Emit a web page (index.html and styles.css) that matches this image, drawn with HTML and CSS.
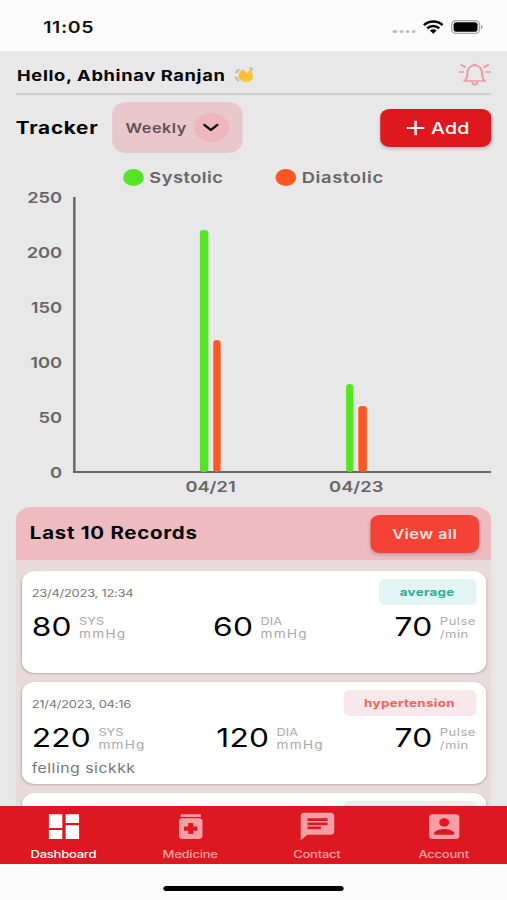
FILE: index.html
```html
<!DOCTYPE html>
<html lang="en">
<head>
  <meta charset="utf-8">
  <title>Blood Pressure Tracker</title>
  <link rel="stylesheet" href="styles.css">
</head>
<body>
  <div class="screen">
    <div class="status-bar">
      <span class="time">11:05</span>
      <div class="status-icons">
        <div class="dots"><i></i><i></i><i></i><i></i></div>
        <svg class="wifi" viewBox="0 0 20 14" preserveAspectRatio="none">
          <path d="M1 5.2a13 13 0 0 1 18 0M4.2 8.4a8.3 8.3 0 0 1 11.6 0" fill="none" stroke="#000" stroke-width="2.5"/>
          <path d="M6.8 10.6a4.6 4.6 0 0 1 6.4 0L10 13.8z"/>
        </svg>
        <svg class="battery" viewBox="0 0 27 14">
          <rect x=".6" y=".6" width="22.8" height="12.8" rx="3.6" fill="none" stroke="#a5a5a5" stroke-width="1.1"/>
          <rect x="2.2" y="2.2" width="19.6" height="9.6" rx="2"/>
          <path d="M24.7 4.9c1.7.6 1.7 3.6 0 4.2z" fill="#999"/>
        </svg>
      </div>
    </div>

    <div class="header">
      <span class="hello">Hello, Abhinav Ranjan</span>
      <svg class="wave" viewBox="0 0 20 20">
        <path d="M2 7l2.500-3M1.500 13l2.500 3.500M15.500 1.800l2 1.500" fill="none" stroke="#b9bcc2" stroke-width="2.200" stroke-linecap="round"/>
        <path d="M8.500 3.500l5 4.500.8-3.500c.3-1.500 2.500-1.300 2.700.2l1.200 6.300c.8 4.500-2.200 7.500-6.200 7.500-2.800 0-4.500-1-6-2.500L3.800 13c-1-1.300.3-2.300 1.400-1.600L4.200 9.200c-.5-1.600.9-2.300 1.900-1.400-.8-2 .3-3 1.300-2.300-.3-1.700.4-2.500 1.100-2z" fill="#fcc43a"/>
        <path d="M7.400 5.500l4.600 4.500M6.100 7.800l4.400 4M5.200 11.400l3.800 2.900M14 9c-1.800 1-2 2.500-1.200 4.200" fill="none" stroke="#eba628" stroke-width=".8"/>
      </svg>
      <svg class="bell" viewBox="0 0 27 23" fill="none" stroke="#f19aa3" stroke-width="1.700" stroke-linecap="round" stroke-linejoin="round">
        <path d="M5 18c2-1.800 2.500-4 2.500-8C7.500 5.500 10 2.500 13.500 2.500s6 3 6 7.500c0 4 .5 6.200 2.500 8z"/>
        <path d="M12.500 2c0-1 2-1 2 0M11.500 19.500c.5 2.800 3.500 2.800 4 0M1 9h3M2.500 2l3 2M26 9h-3M24.500 2l-3 2"/>
      </svg>
    </div>

    <div class="toolbar">
      <h1>Tracker</h1>
      <div class="dropdown">
        <span>Weekly</span>
        <div class="dropdown-icon">
          <svg width="14" height="10" viewBox="0 0 14 10"><path d="M1.800 2L7 7 12.200 2" fill="none" stroke="#111" stroke-width="2.300" stroke-linecap="round" stroke-linejoin="round"/></svg>
        </div>
      </div>
      <button class="add-button">
        <svg width="16" height="16" viewBox="0 0 16 16"><path d="M8 .8v14.400M.8 8h14.400" stroke="#fff" stroke-width="2"/></svg>
        <span>Add</span>
      </button>
    </div>

    <div class="legend">
      <div class="legend-item systolic"><i></i><span>Systolic</span></div>
      <div class="legend-item diastolic"><i></i><span>Diastolic</span></div>
    </div>

    <div class="chart">
      <div class="y-axis">
        <span>250</span>
        <span>200</span>
        <span>150</span>
        <span>100</span>
        <span>50</span>
        <span>0</span>
      </div>
      <div class="plot-wrap">
        <div class="plot">
          <div class="group">
            <div class="bar green" style="height: 242px"></div>
            <div class="bar orange" style="height: 132px"></div>
          </div>
          <div class="group">
            <div class="bar green" style="height: 88px"></div>
            <div class="bar orange" style="height: 66px"></div>
          </div>
        </div>
        <div class="x-axis">
          <span>04/21</span>
          <span>04/23</span>
        </div>
      </div>
    </div>

    <div class="records">
      <div class="records-header">
        <h2>Last 10 Records</h2>
        <button class="view-button">View all</button>
      </div>
      <div class="record-list">
        <div class="card">
          <div class="card-top">
            <span class="date">23/4/2023, 12:34</span>
            <span class="badge average">average</span>
          </div>
          <div class="values">
            <div class="value"><b>80</b><span>SYS<small>mmHg</small></span></div>
            <div class="value"><b>60</b><span>DIA<small>mmHg</small></span></div>
            <div class="value"><b>70</b><span class="pulse">Pulse<small>/min</small></span></div>
          </div>
        </div>
        <div class="card">
          <div class="card-top">
            <span class="date">21/4/2023, 04:16</span>
            <span class="badge hypertension">hypertension</span>
          </div>
          <div class="values">
            <div class="value"><b>220</b><span>SYS<small>mmHg</small></span></div>
            <div class="value"><b>120</b><span>DIA<small>mmHg</small></span></div>
            <div class="value"><b>70</b><span class="pulse">Pulse<small>/min</small></span></div>
          </div>
          <p class="note">felling sickkk</p>
        </div>
        <div class="card">
          <div class="card-top">
            <span class="date"></span>
            <span class="badge hypertension"></span>
          </div>
        </div>
      </div>
    </div>

    <div class="nav">
      <div class="tab active">
        <svg viewBox="0 0 24 24"><path d="M3 13h8V3H3v10zm0 8h8v-6.500H3V21zm10 0h8V11h-8v10zm0-18v6.500h8V3h-8z"/></svg>
        <span>Dashboard</span>
      </div>
      <div class="tab">
        <svg viewBox="0 0 24 24"><path d="M6 3h12v2H6zM17 6H7c-1.100 0-2 .9-2 2v11c0 1.100.9 2 2 2h10c1.100 0 2-.9 2-2V8c0-1.100-.9-2-2-2zm-1 9h-2.500v2.500h-3V15H8v-3h2.500V9.500h3V12H16v3z"/></svg>
        <span>Medicine</span>
      </div>
      <div class="tab">
        <svg viewBox="0 0 24 24"><path d="M20 2H4c-1.100 0-1.990.9-1.990 2L2 22l4-4h14c1.100 0 2-.9 2-2V4c0-1.100-.9-2-2-2zM6 9h12v2H6V9zm8 5H6v-2h8v2zm4-6H6V6h12v2z"/></svg>
        <span>Contact</span>
      </div>
      <div class="tab">
        <svg viewBox="0 0 24 24"><path d="M3 5v14c0 1.100.89 2 2 2h14c1.100 0 2-.9 2-2V5c0-1.100-.9-2-2-2H5c-1.110 0-2 .9-2 2zm12 4c0 1.660-1.340 3-3 3s-3-1.340-3-3 1.340-3 3-3 3 1.340 3 3zm-9 8c0-2 4-3.100 6-3.100s6 1.100 6 3.100v1H6v-1z"/></svg>
        <span>Account</span>
      </div>
    </div>
    <div class="home-area">
      <div class="home-indicator"></div>
    </div>
  </div>
</body>
</html>
```
FILE: styles.css
```css
* {
  box-sizing: border-box;
}

body {
  margin: 0;
  overflow: hidden;
  background-color: #fbfbfb;
  font-family: Inter, "Open Sans", sans-serif;
}

/* The phone layout is 416px wide, stretched to fill the 507px window */
.screen {
  display: flex;
  flex-direction: column;
  width: 416px;
  height: 900px;
  overflow: hidden;
  background-color: #e8e8e8;
  transform: scaleX(1.21875);
  transform-origin: 0 0;
}

h1, h2, p {
  margin: 0;
}

button {
  border: none;
  padding: 0;
  font-family: inherit;
}

svg {
  display: block;
  flex: none;
}

span {
  white-space: nowrap;
}

/* Status bar */
.status-bar {
  display: flex;
  flex: none;
  align-items: center;
  justify-content: space-between;
  height: 51px;
  padding: 3px 19px 0 35.5px;
  background-color: #fbfbfb;
}

.time {
  color: #111;
  font-size: 16px;
  font-weight: 600;
  letter-spacing: 0.5px;
}

.status-icons {
  display: flex;
  align-items: center;
}

.dots {
  display: flex;
  gap: 1.8px;
  margin: 9px 6px 0 0;
}

.dots i {
  width: 3.3px;
  height: 3.5px;
  border-radius: 50%;
  background-color: #bcbcbc;
}

.wifi {
  width: 17px;
  height: 14px;
  margin-right: 6px;
}

.battery {
  width: 27px;
  height: 14px;
}

/* Greeting */
.header {
  display: flex;
  flex: none;
  align-items: center;
  height: 44px;
  margin: 0 13px;
  padding-top: 6px;
  border-bottom: 2px solid #cfcfcf;
}

.hello {
  width: 179px;
  padding-left: 1px;
  font-size: 15px;
  font-weight: 700;
  letter-spacing: 0.53px;
}

.wave {
  width: 17px;
  height: 18px;
}

.bell {
  width: 27px;
  height: 23px;
  margin: -2px 0 0 auto;
}

/* Tracker row */
.toolbar {
  display: flex;
  flex: none;
  align-items: center;
  height: 51px;
  margin: 7px 13px 0;
}

h1 {
  width: 79px;
  font-size: 17px;
  font-weight: 700;
  letter-spacing: 0.6px;
}

.dropdown {
  display: flex;
  align-items: center;
  justify-content: space-between;
  width: 107px;
  height: 51px;
  padding: 0 11.5px 0 11px;
  border-radius: 12px;
  background-color: #e9c8cc;
  color: #5c5356;
  font-size: 13.3px;
  font-weight: 600;
  letter-spacing: 0.45px;
}

.dropdown-icon {
  display: flex;
  align-items: center;
  justify-content: center;
  width: 29px;
  height: 29px;
  border-radius: 50%;
  background-color: #efb6bc;
}

.add-button {
  display: flex;
  align-items: center;
  justify-content: center;
  gap: 5px;
  width: 91px;
  height: 38px;
  margin-left: auto;
  padding-left: 3px;
  border-radius: 8px;
  background-color: #df1820;
  box-shadow: 0 2px 3px rgba(0, 0, 0, 0.2);
  color: #fff;
  font-size: 16px;
  font-weight: 500;
  letter-spacing: 0.2px;
}

/* Chart */
.legend {
  display: flex;
  flex: none;
  height: 44px;
  padding: 16px 0 0 101px;
  color: #666;
  font-size: 15px;
  font-weight: 600;
  letter-spacing: 0.4px;
}

.legend-item {
  display: flex;
  align-items: center;
  gap: 4.5px;
  width: 125px;
  height: 17px;
}

.legend-item i {
  width: 17px;
  height: 17px;
  border-radius: 50%;
}

.systolic i,
.green {
  background-color: #55e524;
}

.diastolic i,
.orange {
  background-color: #ff5722;
}

.diastolic {
  letter-spacing: 0.55px;
}

.chart {
  display: flex;
  flex: none;
  height: 310px;
  color: #666;
  font-size: 15px;
  font-weight: 600;
}

.y-axis {
  width: 60px;
  margin-top: -27px;
  padding-right: 9px;
  text-align: right;
}

.y-axis span {
  display: block;
  height: 55px;
  line-height: 55px;
}

.plot {
  display: flex;
  width: 343px;
  height: 276px;
  padding-left: 51px;
  border-left: 2px solid #666;
  border-bottom: 2px solid #666;
}

.group {
  display: flex;
  align-items: flex-end;
  justify-content: center;
  gap: 4px;
  width: 119.5px;
}

.bar {
  width: 6.6px;
  margin-bottom: -1px;
  border-radius: 3px;
}

.x-axis {
  display: flex;
  padding: 4px 0 0 53px;
}

.x-axis span {
  width: 119.5px;
  text-align: center;
}

/* Records */
.records {
  flex: 1;
  min-height: 0;
  overflow: hidden;
  margin: 0 13px;
  border-radius: 13px 13px 0 0;
  background-color: #e8dadd;
}

.records-header {
  display: flex;
  align-items: center;
  justify-content: space-between;
  height: 53px;
  padding: 0 10px 0 11.5px;
  background-color: #eebcc0;
}

h2 {
  margin-top: -2px;
  font-size: 16.8px;
  font-weight: 700;
  letter-spacing: 0.6px;
}

.view-button {
  width: 89px;
  height: 38px;
  border-radius: 8px;
  background-color: #f44336;
  box-shadow: 0 2px 3px rgba(0, 0, 0, 0.2);
  color: #ffe1df;
  font-size: 13.5px;
  font-weight: 600;
  letter-spacing: 0.35px;
}

.record-list {
  display: flex;
  flex-direction: column;
  gap: 9.5px;
  padding: 11px 4.5px 0 5px;
}

.card {
  flex: none;
  height: 101.5px;
  padding: 8px 8px 0;
  border-radius: 11px;
  background-color: #fff;
  box-shadow: 0 1px 2px rgba(0, 0, 0, 0.2);
}

.card-top {
  display: flex;
  align-items: center;
  justify-content: space-between;
  height: 26px;
}

.date {
  padding-top: 2px;
  color: #777;
  font-size: 10.6px;
  letter-spacing: -0.2px;
}

.badge {
  height: 26px;
  border-radius: 5px;
  font-size: 11px;
  font-weight: 700;
  letter-spacing: 0.25px;
  line-height: 27px;
  text-align: center;
}

.average {
  width: 80px;
  background-color: #e2f5f4;
  color: #2bb191;
}

.hypertension {
  width: 109px;
  background-color: #f8e8eb;
  color: #f4625a;
}

.values {
  display: flex;
  justify-content: space-between;
  height: 43px;
}

.value {
  display: flex;
  align-items: center;
  gap: 6px;
}

.value b {
  font-size: 26px;
  font-weight: 400;
  letter-spacing: 0.2px;
}

.value span {
  padding-top: 2px;
  color: #aaa;
  font-size: 10.5px;
  line-height: 13px;
}

.value small {
  display: block;
  font-size: 11.2px;
  letter-spacing: 1px;
}

.value .pulse,
.pulse small {
  font-size: 10.7px;
  letter-spacing: 0.4px;
}

.note {
  margin-top: -3px;
  color: #777;
  font-size: 13px;
  letter-spacing: 0.4px;
  line-height: 24px;
}

/* Bottom navigation */
.nav {
  display: flex;
  flex: none;
  height: 57.5px;
  background-color: #de1820;
}

.tab {
  display: flex;
  flex: 1;
  flex-direction: column;
  align-items: center;
  padding-top: 4px;
  color: #f6a0a5;
  font-size: 10.7px;
  font-weight: 500;
  letter-spacing: -0.2px;
}

.tab svg {
  width: 33px;
  height: 33px;
  fill: currentColor;
}

.tab span {
  margin-top: 5px;
}

.active {
  color: #fff;
}

.home-area {
  flex: none;
  height: 36.5px;
  padding-top: 22.5px;
  background-color: #fbfbfb;
}

.home-indicator {
  width: 148px;
  height: 5px;
  margin: 0 auto;
  border-radius: 3px;
  background-color: #000;
}
```
